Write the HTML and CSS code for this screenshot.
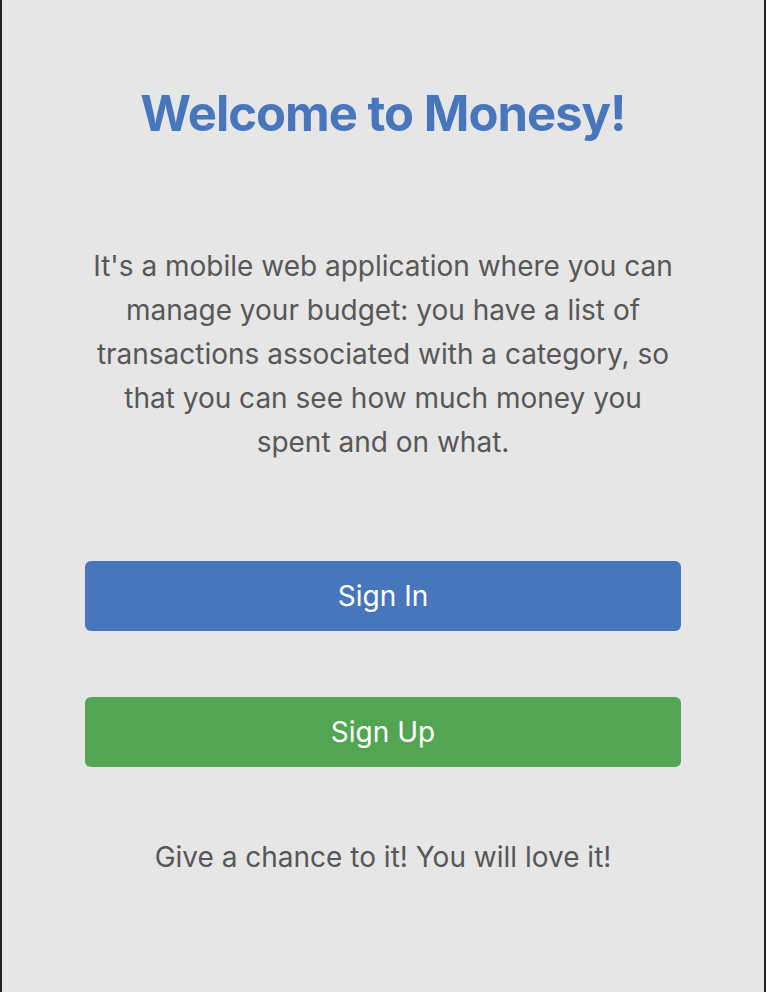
FILE: index.html
```html
<!DOCTYPE html>
<html lang="en">
<head>
<meta charset="utf-8">
<title>Monesy</title>
<link rel="stylesheet" href="styles.css">
</head>
<body>
<main class="page">
  <h1 class="title">Welcome to Monesy!</h1>
  <p class="intro">It's a mobile web application where you can manage your budget: you have a list of transactions associated with a category, so that you can see how much money you spent and on what.</p>
  <div class="actions">
    <button class="btn btn-blue">Sign In</button>
    <button class="btn btn-green">Sign Up</button>
  </div>
  <p class="footer">Give a chance to it! You will love it!</p>
</main>
</body>
</html>
```
FILE: styles.css
```css
html, body {
  margin: 0;
  padding: 0;
  height: 100%;
}
body {
  background: #e6e6e6;
  font-family: Inter, "Noto Sans", sans-serif;
  color: #575757;
  border-left: 2px solid #222;
  border-right: 2px solid #222;
  box-sizing: border-box;
}
.page {
  width: 596px;
  margin: 0 auto;
  padding-top: 84px;
  display: flex;
  flex-direction: column;
  align-items: center;
  text-align: center;
}
.title {
  margin: 0;
  font-size: 49px;
  font-weight: 700;
  color: #4876bc;
  letter-spacing: -1px;
  line-height: 60px;
}
.intro {
  margin: 100px 0 0;
  font-size: 28px;
  line-height: 44px;
  padding: 0 4px;
}
.actions {
  width: 100%;
  margin-top: 97px;
  display: flex;
  flex-direction: column;
  gap: 66px;
}
.btn {
  width: 100%;
  height: 70px;
  border: none;
  border-radius: 6px;
  color: #fff;
  font-family: Inter, "Noto Sans", sans-serif;
  font-size: 28px;
  cursor: pointer;
}
.btn-blue { background: #4876bc; }
.btn-green { background: #52a552; }
.footer {
  margin: 74px 0 0;
  font-size: 28px;
  line-height: 32px;
}
```
